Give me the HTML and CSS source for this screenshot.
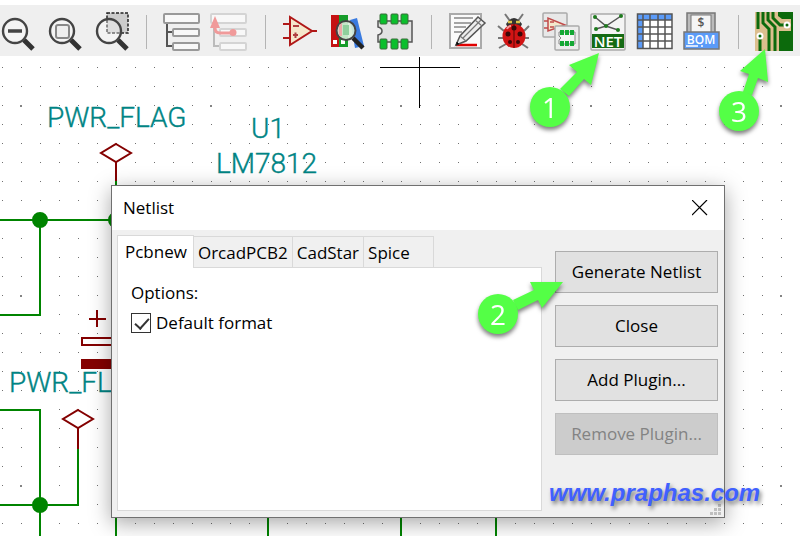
FILE: index.html
```
<!DOCTYPE html>
<html lang="en">
<head>
  <meta charset="UTF-8" />
  <meta name="viewport" content="width=device-width, initial-scale=1.0"/>
  <title>Eeschema - Netlist</title>
  <link rel="stylesheet" href="styles.css">
</head>
<body>

  <!-- schematic sheet -->
  <svg class="sheet" aria-hidden="true">
    <defs>
      <pattern id="dots" x="2" y="10" width="19" height="19" patternUnits="userSpaceOnUse">
        <rect width="1" height="1" fill="#707070"/>
      </pattern>
      <pattern id="bigDots" x="20" y="105" width="190" height="190" patternUnits="userSpaceOnUse">
        <rect width="2" height="2" fill="#848484"/>
      </pattern>
    </defs>
    <rect width="100%" height="100%" fill="url(#dots)"/>
    <rect width="100%" height="100%" fill="url(#bigDots)"/>

    <g class="wire">
      <path d="M0 220H116M40 220V315H0M0 410H40V900M0 505H78V449M116 181V220M116 500V900M268 500V900M401 500V900M496 500V900"/>
      <circle cx="40" cy="220" r="7"/>
      <circle cx="116" cy="220" r="7"/>
      <circle cx="40" cy="505" r="7"/>
    </g>
    <g class="part">
      <path d="M116 144L131 153L116 162L101 153ZM116 162V181"/>
      <path d="M78 410L93 419L78 428L63 419ZM78 428V449"/>
      <path d="M89 319H106M97 310V327M130 338H82V345H130"/>
      <rect x="82" y="360" width="50" height="8" fill="#840000"/>
    </g>
    <g class="field">
      <text x="47" y="127">PWR_FLAG</text>
      <text x="251" y="138">U1</text>
      <text x="216" y="173">LM7812</text>
      <text x="9" y="392">PWR_FLAG</text>
    </g>
    <path d="M380 67.5H460M419.5 57V108" stroke="#000"/>
  </svg>

  <div class="toolbar">
    <button title="Zoom out"><svg viewBox="0 0 40 40">
      <path d="M27 28L36 37" stroke="#333" stroke-width="5"/>
      <circle cx="18" cy="19" r="12" fill="#f4f4f4" stroke="#444" stroke-width="2.4"/>
      <path d="M11 19H25" stroke="#444" stroke-width="3.5"/>
    </svg></button>
    <button title="Zoom to fit"><svg viewBox="0 0 40 40">
      <path d="M27 28L36 37" stroke="#333" stroke-width="5"/>
      <circle cx="18" cy="19" r="12" fill="#f4f4f4" stroke="#444" stroke-width="2.4"/>
      <rect x="12" y="13" width="13" height="13" rx="2" fill="#eee" stroke="#888" stroke-width="2"/>
    </svg></button>
    <button title="Zoom to selection"><svg viewBox="0 0 40 40">
      <rect x="16" y="1" width="21" height="20" fill="#ccc" stroke="#222" stroke-width="1.5" stroke-dasharray="3 1.5"/>
      <path d="M27 28L36 37" stroke="#333" stroke-width="5"/>
      <circle cx="18" cy="19" r="12" fill="#fff" fill-opacity=".35" stroke="#444" stroke-width="2.4"/>
    </svg></button>
    <span class="sep"></span>
    <button title="Hierarchy"><svg viewBox="0 0 40 40">
      <path d="M4 11V34H10M4 20H10" fill="none" stroke="#555" stroke-width="2"/>
      <g fill="#f8f8f8" stroke="#999" stroke-width="2">
        <rect x="1" y="2" width="35" height="9" rx="1"/>
        <rect x="10" y="17" width="26" height="7" rx="1"/>
        <rect x="10" y="31" width="26" height="7" rx="1"/>
      </g>
    </svg></button>
    <button title="Leave sheet" disabled><svg viewBox="0 0 40 40">
      <path d="M4 11V34H10" fill="none" stroke="#bbb" stroke-width="2"/>
      <g fill="#f8f8f8" stroke="#d4d4d4" stroke-width="2">
        <rect x="1" y="2" width="35" height="9" rx="1"/>
        <rect x="10" y="17" width="26" height="7" rx="1"/>
        <rect x="10" y="31" width="26" height="7" rx="1"/>
      </g>
      <path d="M5 12V16Q5 21 10 21H22" fill="none" stroke="#f09a9a" stroke-width="3"/>
      <path d="M5 4L10 16H0Z" fill="#f09a9a"/>
      <circle cx="23" cy="20.500" r="3.500" fill="#f09a9a"/>
    </svg></button>
    <span class="sep"></span>
    <button title="Symbol editor"><svg viewBox="0 0 40 40">
      <path d="M1 12H8M1 26H8M30 19H35" stroke="#b01818" stroke-width="2"/>
      <path d="M8 5V33L30 19Z" fill="#f5e8cc" stroke="#b01818" stroke-width="2"/>
      <path d="M11 14H17M11 23H16M13.500 20.500V26" stroke="#b04040" stroke-width="2"/>
    </svg></button>
    <button title="Library browser"><svg viewBox="0 0 40 40">
      <rect x="2" y="3" width="8" height="32" fill="#c41212"/>
      <rect x="10" y="3" width="9" height="32" fill="#169c2a"/>
      <path d="M21 8L28 6L35 34L26 36Z" fill="#3a7be0"/>
      <rect x="4" y="28" width="4" height="4" fill="#fff"/>
      <rect x="12" y="28" width="4" height="4" fill="#fff"/>
      <path d="M24 26L34 36" stroke="#222" stroke-width="4.500"/>
      <circle cx="17" cy="18.500" r="9.500" fill="#d7eed8" fill-opacity=".9" stroke="#444" stroke-width="2"/>
      <path d="M14 13V23H20V13" fill="#8fcf9c"/>
      <path d="M10 13V24H13V11Z" fill="#eea8a8"/>
    </svg></button>
    <button title="Footprint editor"><svg viewBox="0 0 40 40">
      <path d="M2 9H36V30H2V23Q6 22 6 19Q6 16 2 15Z" fill="#e2e2e2" stroke="#555" stroke-width="1.500"/>
      <g fill="#0bbf2c" stroke="#3a6b3a" stroke-width="1">
        <rect x="4" y="2" width="7" height="10" rx="1"/><rect x="15" y="2" width="7" height="10" rx="1"/><rect x="25" y="2" width="7" height="10" rx="1"/>
        <rect x="4" y="27" width="7" height="10" rx="1"/><rect x="15" y="27" width="7" height="10" rx="1"/><rect x="25" y="27" width="7" height="10" rx="1"/>
      </g>
    </svg></button>
    <span class="sep"></span>
    <button title="Annotate"><svg viewBox="0 0 40 40">
      <rect x="2" y="2" width="31" height="34" fill="#fafafa" stroke="#aaa" stroke-width="2"/>
      <path d="M6 6H25M6 11H23M6 15H18M6 20H14" stroke="#888" stroke-width="1.500"/>
      <path d="M8 33H29" stroke="#e00000" stroke-width="2.500"/>
      <path d="M8 33L12 24L30 5L37 11L18 29Z" fill="#eee" stroke="#555" stroke-width="1.500"/>
      <path d="M12 24L18 29M15 26L33 8M27 8L34 14" fill="none" stroke="#777" stroke-width="1.200"/>
      <path d="M8 33L9 30L11 32Z" stroke="#222"/>
    </svg></button>
    <button title="Electrical rules check"><svg viewBox="0 0 40 40">
      <path d="M15 9L10 2M23 9L28 2M9 19L3 14M9 26H3M11 32L4 36M29 19L34 14M29 26H34M27 32L33 36" stroke="#777" stroke-width="2"/>
      <path d="M11 12Q19 0 27 12L25 16H13Z" fill="#333"/>
      <path d="M13 10H17M21 10H25" stroke="#dcc44a" stroke-width="2.500"/>
      <ellipse cx="19" cy="24" rx="11.500" ry="12" fill="#d21414"/>
      <path d="M19 12V36" stroke="#5a0808"/>
      <g fill="#3a0808"><circle cx="13" cy="22" r="2.500"/><circle cx="25" cy="22" r="2.500"/><circle cx="15" cy="30" r="2"/><circle cx="23" cy="30" r="2"/><circle cx="19" cy="16" r="2.500"/></g>
      <path d="M12 17Q13 14 16 14" fill="none" stroke="#f29a9a" stroke-width="2"/>
    </svg></button>
    <button title="Assign footprints"><svg viewBox="0 0 40 40">
      <rect x="1" y="1" width="24" height="24" rx="1" fill="#e8e8e8" stroke="#aaa" stroke-width="1.500"/>
      <path d="M6 6V19L23 13Z" fill="#f5e8cc" stroke="#c04a4a" stroke-width="1.500"/>
      <path d="M2 9H6M2 16H6M8 10H12M8 15H12" stroke="#c04a4a" stroke-width="1.500"/>
      <rect x="13" y="14" width="24" height="24" rx="1" fill="#ececec" stroke="#aaa" stroke-width="1.500"/>
      <path d="M17 20H33V32H17V28L19 26L17 24Z" fill="#f5f5f5" stroke="#888"/>
      <g fill="#14a834"><rect x="18" y="18" width="4" height="5"/><rect x="23" y="18" width="4" height="5"/><rect x="28" y="18" width="4" height="5"/><rect x="18" y="29" width="4" height="5"/><rect x="23" y="29" width="4" height="5"/><rect x="28" y="29" width="4" height="5"/></g>
    </svg></button>
    <button title="Generate netlist"><svg viewBox="0 0 40 40">
      <rect x="2" y="2" width="34" height="36" rx="1" fill="#f4f4f4" stroke="#aaa" stroke-width="1.500"/>
      <path d="M6 5L17 14L32 4M7 17L17 14L29 18" fill="none" stroke="#555" stroke-width="1.500"/>
      <g fill="#1e7a1e"><circle cx="6" cy="5" r="2"/><circle cx="7" cy="17" r="2"/><circle cx="17" cy="14" r="2"/><circle cx="32" cy="4" r="2"/><circle cx="29" cy="18" r="2"/></g>
      <rect x="3" y="22" width="32" height="14" fill="#146b14"/>
      <text x="19" y="35" class="icon-text net">NET</text>
    </svg></button>
    <button title="Symbol fields table"><svg viewBox="0 0 40 40">
      <rect x="1" y="2" width="35" height="35" fill="#fff"/>
      <path d="M1 2H36V8H7V37H1Z" fill="#5b9bf8"/>
      <path d="M1.500 2H36V36.500H1.500ZM7 2V37M14 2V37M22 2V37M29 2V37M1 8H36M1 15H36M1 22H36M1 29H36" fill="none" stroke="#555" stroke-width="1.500"/>
    </svg></button>
    <button title="Bill of materials"><svg viewBox="0 0 40 40">
      <rect x="4" y="1" width="28" height="22" fill="#bbb" stroke="#777" stroke-width="1.500"/>
      <rect x="8" y="3" width="20" height="19" fill="#f5f5f5" stroke="#777"/>
      <text x="18" y="15" class="icon-text dollar">$</text>
      <rect x="1" y="20" width="35" height="17" fill="#5b9bf8" stroke="#777" stroke-width="1.500"/>
      <text x="18" y="32" class="icon-text bom">BOM</text>
      <path d="M3 34H15M18 34H20" stroke="#fff" stroke-width="1.500"/>
    </svg></button>
    <span class="sep"></span>
    <button title="Run Pcbnew"><svg viewBox="0 0 40 40">
      <rect width="38" height="39" fill="#dcbf8e"/>
      <path d="M23 0H38V7H27L23 4ZM24 19H38V39H24Z" fill="#0c6a0c"/>
      <g fill="none" stroke="#0c6a0c" stroke-width="3">
        <path d="M3 0V17M8 0V11L14 17V39M13 0V8L20 15V39M18 0V6L25 13H31M5 24V39"/>
      </g>
      <path d="M37 7V20" stroke="#0c6a0c" stroke-width="2"/>
      <circle cx="5" cy="24" r="2.500" fill="#0c6a0c" stroke="#fff" stroke-width="2"/>
      <circle cx="32" cy="13" r="2.500" fill="#0c6a0c" stroke="#fff" stroke-width="2"/>
    </svg></button>
  </div>

  <div class="dialog" role="dialog" aria-labelledby="title">
    <div class="titlebar">
      <h1 id="title">Netlist</h1>
      <button class="close" aria-label="Close window"><svg width="16" height="16"><path d="M0 0L15 15M15 0L0 15" stroke="#000" stroke-width="1.200"/></svg></button>
    </div>
    <div class="content">
      <div class="notebook">
        <div class="tabs" role="tablist">
          <button class="tab active" role="tab" aria-selected="true">Pcbnew</button>
          <button class="tab" role="tab">OrcadPCB2</button>
          <button class="tab" role="tab">CadStar</button>
          <button class="tab" role="tab">Spice</button>
        </div>
        <div class="panel" role="tabpanel">
          <p>Options:</p>
          <div class="option">
            <input type="checkbox" id="default" checked>
            <label for="default">Default format</label>
          </div>
        </div>
      </div>
      <div class="actions">
        <button>Generate Netlist</button>
        <button>Close</button>
        <button>Add Plugin...</button>
        <button disabled>Remove Plugin...</button>
      </div>
    </div>
    <svg class="grip" width="12" height="12" aria-hidden="true"><path d="M8 0h3v3h-3zM4 4h3v3h-3zM8 4h3v3h-3zM0 8h3v3h-3zM4 8h3v3h-3zM8 8h3v3h-3z" fill="#bfbfbf"/></svg>
    <a class="watermark" href="#">www.praphas.com</a>
  </div>

  <!-- numbered steps -->
  <svg class="steps">
    <g>
      <path d="M599 53L591 85L584 79L569 96L560 89L577 72L569 65Z"/>
      <circle cx="550" cy="107" r="20"/>
      <text x="550" y="118">1</text>
    </g>
    <g>
      <path d="M563 282L542 308L538 300L518 310L513 300L534 290L530 282Z"/>
      <circle cx="498" cy="314" r="20"/>
      <text x="498" y="325">2</text>
    </g>
    <g>
      <path d="M765 49L768 82L758 78L752 95L743 92L749 74L740 71Z"/>
      <circle cx="739" cy="111" r="20"/>
      <text x="739" y="122">3</text>
    </g>
  </svg>

</body>
</html>
```
FILE: styles.css
```
* { box-sizing: border-box; }
body {
  margin: 0;
  min-height: 100vh;
  position: relative;
  overflow: hidden;
  background: #fff;
  font: 17px/24px "Open Sans", "Noto Sans", sans-serif;
  color: #000;
}
button { font: inherit; color: inherit; padding: 0; }

/* schematic */
.sheet, .steps {
  position: absolute;
  top: 0;
  left: 0;
  width: 100%;
  height: 100%;
}
.wire { fill: #008400; stroke: #008400; stroke-width: 2; }
.wire path { fill: none; }
.part { fill: none; stroke: #840000; stroke-width: 2; }
.field { fill: #008484; font: 300 28px Roboto, sans-serif; }
.field text { stroke: #008484; stroke-width: 0.4; }

/* toolbar */
.toolbar {
  position: relative;
  display: flex;
  gap: 7px;
  margin-top: 5px;
  padding: 7px 0 4px;
  background: #efefef;
}
.toolbar button {
  flex: none;
  width: 40px;
  height: 40px;
  border: 0;
  background: none;
}
.toolbar button:first-child { margin-left: -3px; }
.toolbar svg { display: block; width: 40px; height: 40px; }
.sep {
  flex: none;
  width: 1px;
  height: 34px;
  margin: 3px 9px 0 8px;
  background: #b4b4b4;
}
.icon-text { font-family: "Open Sans", sans-serif; fill: #fff; text-anchor: middle; }
.net { font-size: 15px; font-weight: 600; }
.bom { font-size: 12px; font-weight: 600; }
.dollar { font-size: 12px; font-weight: 600; fill: #555; }

/* netlist dialog */
.dialog {
  position: absolute;
  top: 185px;
  left: 111px;
  width: 614px;
  background: #f0f0f0;
  border: 1px solid #707070;
  box-shadow: 0 5px 20px rgba(0, 0, 0, 0.35);
}
.titlebar {
  display: flex;
  align-items: center;
  justify-content: space-between;
  height: 44px;
  padding: 0 16px 0 11px;
  background: #fff;
}
.titlebar h1 { margin: 0; font-size: 17px; font-weight: 400; }
.close { border: 0; background: none; }
.close svg { display: block; }
.content {
  display: flex;
  gap: 13px;
  padding: 5px 6px 6px 5px;
}
.notebook { flex: 1; display: flex; flex-direction: column; }
.tabs { display: flex; align-items: flex-end; }
.tab {
  height: 31px;
  min-width: 70px;
  padding: 2px 4px 0;
  background: #f0f0f0;
  border: 1px solid #d9d9d9;
  border-left: 0;
  border-bottom: 0;
  text-align: left;
}
.tab.active {
  height: 33px;
  min-width: 76px;
  margin-bottom: -1px;
  padding: 0 6px 0 7px;
  background: #fff;
  border-left: 1px solid #d9d9d9;
  position: relative;
}
.panel {
  min-height: 244px;
  padding: 13px;
  background: #fff;
  border: 1px solid #d9d9d9;
}
.panel p { margin: 0 0 6px; }
.option { display: flex; align-items: center; gap: 5px; }
.option input {
  appearance: none;
  width: 20px;
  height: 20px;
  margin: 0;
  border: 1px solid #333;
  position: relative;
}
.option input:checked::after {
  content: "";
  position: absolute;
  left: 6px;
  top: 1px;
  width: 6px;
  height: 12px;
  border: solid #333;
  border-width: 0 2px 2px 0;
  transform: rotate(42deg);
}
.actions {
  display: flex;
  flex-direction: column;
  gap: 12px;
  width: 163px;
  padding-top: 16px;
}
.actions button {
  height: 42px;
  background: #e1e1e1;
  border: 1px solid #adadad;
}
.actions button:disabled {
  background: #ccc;
  border-color: #bfbfbf;
  color: #838383;
}
.grip { position: absolute; right: 2px; bottom: 1px; }
.watermark {
  position: absolute;
  left: 437px;
  bottom: 10px;
  font: italic bold 24px/28px "Liberation Sans", sans-serif;
  color: #4060ff;
  text-decoration: none;
  text-shadow: 2px 3px 4px rgba(0, 0, 0, 0.5);
}

/* callouts */
.steps { pointer-events: none; fill: #54ff46; }
.steps g { filter: drop-shadow(0 3px 2px rgba(0, 0, 0, 0.5)); }
.steps text { fill: #fff; font-size: 28px; text-anchor: middle; }
```
